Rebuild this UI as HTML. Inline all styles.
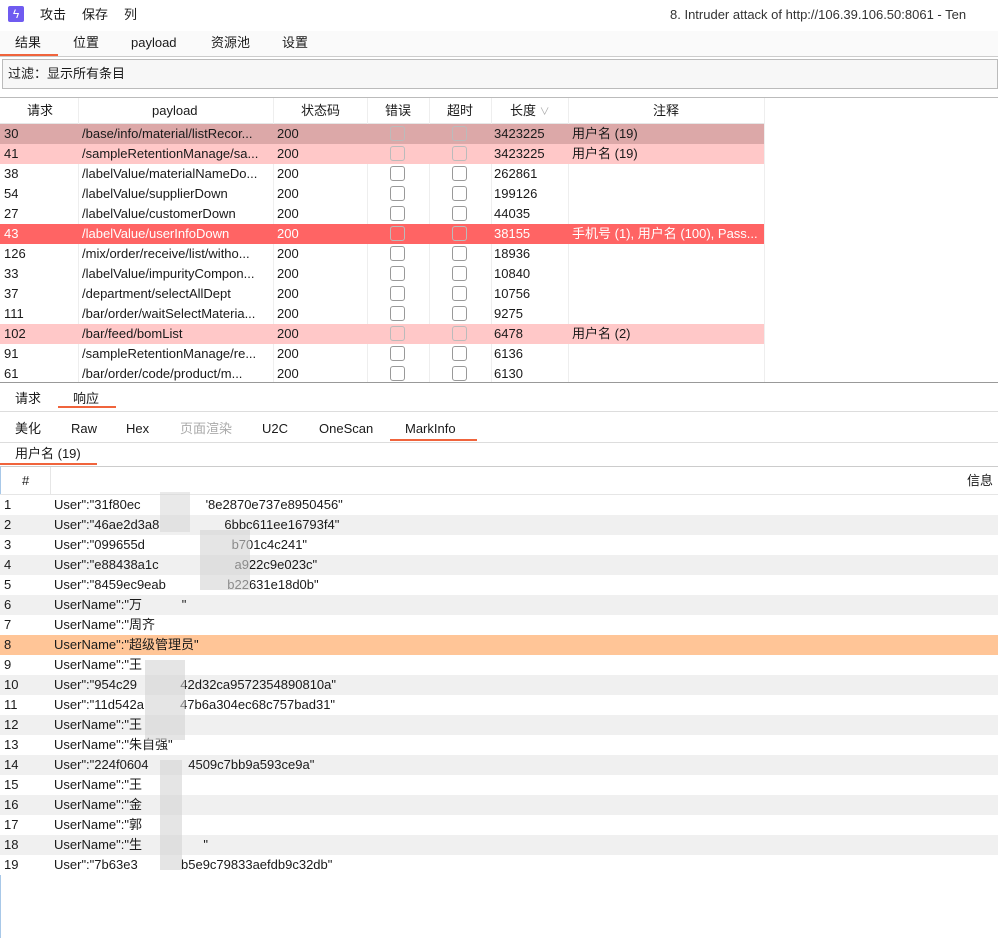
<!DOCTYPE html>
<html><head><meta charset="utf-8"><style>
*{box-sizing:border-box;margin:0;padding:0}
body{width:998px;height:938px;overflow:hidden;background:#fff;font-family:"Liberation Sans","Noto Sans CJK SC",sans-serif;font-size:13px;line-height:18px;color:#1a1a1a;position:relative}
.a{position:absolute;white-space:nowrap;line-height:18px;height:18px}
.ul{position:absolute;height:2px;background:#f0643c}
.row{position:absolute;left:0;height:20px;line-height:20px;width:764px}
.row span{position:absolute;overflow:hidden;white-space:nowrap;line-height:20px;height:20px}
.cb{position:absolute;width:15px;height:15px;border:1px solid #999;border-radius:3px;top:2px}
.br{position:absolute;left:0;width:998px;height:20px;line-height:20px}
.br span{position:absolute;white-space:nowrap;line-height:20px;height:20px}
.blur{position:absolute;background:#d4d4d4}
.bx{position:absolute}
</style></head><body>
<div class="bx" style="left:8px;top:6px;width:16px;height:16px;background:#6f5bf0;border-radius:2px;color:#fff;font-size:12px;line-height:16px;text-align:center">ϟ</div>
<div class="a" style="left:40px;top:6px">攻击</div>
<div class="a" style="left:82px;top:6px">保存</div>
<div class="a" style="left:124px;top:6px">列</div>
<div class="a" style="left:670px;top:6px;color:#333">8. Intruder attack of http://106.39.106.50:8061 - Ten</div>
<div class="bx" style="left:0;top:31px;width:998px;height:26px;background:#fafafa;border-bottom:1px solid #ccc"></div>
<div class="a" style="left:15px;top:34px">结果</div><div class="ul" style="left:0;top:54px;width:58px"></div>
<div class="a" style="left:73px;top:34px">位置</div>
<div class="a" style="left:131px;top:34px">payload</div>
<div class="a" style="left:211px;top:34px">资源池</div>
<div class="a" style="left:282px;top:34px">设置</div>
<div class="bx" style="left:2px;top:59px;width:996px;height:30px;background:#f7f7f7;border:1px solid #bbb"></div>
<div class="a" style="left:8px;top:65px">过滤：显示所有条目</div>
<div class="bx" style="left:0;top:97px;width:998px;height:286px;border-top:1px solid #bbb;border-bottom:1px solid #999"></div>
<div class="bx" style="left:0;top:98px;width:764px;height:26px;border-bottom:1px solid #e6e6e6"></div>
<div class="bx" style="left:78px;top:98px;width:1px;height:284px;background:#eee"></div>
<div class="bx" style="left:273px;top:98px;width:1px;height:284px;background:#eee"></div>
<div class="bx" style="left:367px;top:98px;width:1px;height:284px;background:#eee"></div>
<div class="bx" style="left:429px;top:98px;width:1px;height:284px;background:#eee"></div>
<div class="bx" style="left:491px;top:98px;width:1px;height:284px;background:#eee"></div>
<div class="bx" style="left:568px;top:98px;width:1px;height:284px;background:#eee"></div>
<div class="bx" style="left:764px;top:98px;width:1px;height:284px;background:#eee"></div>
<div class="a" style="left:27px;top:102px">请求</div>
<div class="a" style="left:152px;top:102px">payload</div>
<div class="a" style="left:301px;top:102px">状态码</div>
<div class="a" style="left:385px;top:102px">错误</div>
<div class="a" style="left:447px;top:102px">超时</div>
<div class="a" style="left:510px;top:102px">长度 <span style="color:#aaa;font-size:10px">∨</span></div>
<div class="a" style="left:653px;top:102px">注释</div>
<div id="rows"></div>
<div class="a" style="left:15px;top:390px">请求</div>
<div class="a" style="left:73px;top:390px">响应</div><div class="ul" style="left:58px;top:406px;width:58px"></div>
<div class="bx" style="left:0;top:411px;width:998px;height:1px;background:#ddd"></div>
<div class="a" style="left:15px;top:420px">美化</div>
<div class="a" style="left:71px;top:420px">Raw</div>
<div class="a" style="left:126px;top:420px">Hex</div>
<div class="a" style="left:180px;top:420px;color:#aaa">页面渲染</div>
<div class="a" style="left:262px;top:420px">U2C</div>
<div class="a" style="left:319px;top:420px">OneScan</div>
<div class="a" style="left:405px;top:420px">MarkInfo</div><div class="ul" style="left:390px;top:439px;width:87px"></div>
<div class="bx" style="left:0;top:442px;width:998px;height:1px;background:#ddd"></div>
<div class="a" style="left:15px;top:445px">用户名 (19)</div><div class="ul" style="left:0;top:463px;width:97px"></div>
<div class="bx" style="left:0;top:466px;width:998px;height:472px;border-left:1px solid #a8c8e8;border-top:1px solid #ccc"></div>
<div class="bx" style="left:0;top:467px;width:998px;height:28px;border-bottom:1px solid #e6e6e6"></div>
<div class="bx" style="left:50px;top:467px;width:1px;height:28px;background:#e6e6e6"></div>
<div class="a" style="left:22px;top:472px">#</div>
<div class="a" style="left:967px;top:472px">信息</div>
<div id="brows"></div>
<script>
var R=[["30","/base/info/material/listRecor...","3423225","用户名 (19)","#dca8a8",0],
["41","/sampleRetentionManage/sa...","3423225","用户名 (19)","#ffc8c8",0],
["38","/labelValue/materialNameDo...","262861","","",0],
["54","/labelValue/supplierDown","199126","","",0],
["27","/labelValue/customerDown","44035","","",0],
["43","/labelValue/userInfoDown","38155","手机号 (1), 用户名 (100), Pass...","#ff6464",1],
["126","/mix/order/receive/list/witho...","18936","","",0],
["33","/labelValue/impurityCompon...","10840","","",0],
["37","/department/selectAllDept","10756","","",0],
["111","/bar/order/waitSelectMateria...","9275","","",0],
["102","/bar/feed/bomList","6478","用户名 (2)","#ffc8c8",0],
["91","/sampleRetentionManage/re...","6136","","",0],
["61","/bar/order/code/product/m...","6130","","",0]];
var h="";R.forEach(function(r,i){var y=124+i*20;var c=r[5]?"#fff":"#1a1a1a";
h+='<div class="row" style="top:'+y+'px;background:'+(r[4]||"transparent")+';color:'+c+'"><span style="left:4px">'+r[0]+'</span><span style="left:82px;width:190px">'+r[1]+'</span><span style="left:277px">200</span><div class="cb" style="left:390px;'+(r[4]?'border-color:#bbb':'')+'"></div><div class="cb" style="left:452px;'+(r[4]?'border-color:#bbb':'')+'"></div><span style="left:494px">'+r[2]+'</span><span style="left:572px;width:190px">'+r[3]+'</span></div>';});
document.getElementById("rows").innerHTML=h;
var s=function(n){return "\u00a0".repeat(n)};
var B=['User":"31f80ec'+s(18)+'\'8e2870e737e8950456"','User":"46ae2d3a8'+s(18)+'6bbc611ee16793f4"','User":"099655d'+s(24)+'b701c4c241"','User":"e88438a1c'+s(21)+'a922c9e023c"','User":"8459ec9eab'+s(17)+'b22631e18d0b"','UserName":"万'+s(11)+'"','UserName":"周齐','UserName":"超级管理员"','UserName":"王','User":"954c29'+s(12)+'42d32ca9572354890810a"','User":"11d542a'+s(10)+'47b6a304ec68c757bad31"','UserName":"王','UserName":"朱自强"','User":"224f0604'+s(11)+'4509c7bb9a593ce9a"','UserName":"王','UserName":"金','UserName":"郭','UserName":"生'+s(17)+'"','User":"7b63e3'+s(12)+'b5e9c79833aefdb9c32db"'];
h="";B.forEach(function(t,i){var y=495+i*20;var bg=i==7?"#ffc597":(i%2?"#f0f0f0":"#fff");
h+='<div class="br" style="top:'+y+'px;background:'+bg+'"><span style="left:4px">'+(i+1)+'</span><span style="left:54px">'+t+'</span></div>';});
h+='<div class="blur" style="left:160px;top:492px;width:30px;height:40px;opacity:.5"></div><div class="blur" style="left:200px;top:530px;width:50px;height:60px;opacity:.6"></div><div class="blur" style="left:145px;top:660px;width:40px;height:80px;opacity:.6"></div><div class="blur" style="left:160px;top:760px;width:22px;height:110px;opacity:.6"></div>';
document.getElementById("brows").innerHTML=h;
</script>
</body></html>
